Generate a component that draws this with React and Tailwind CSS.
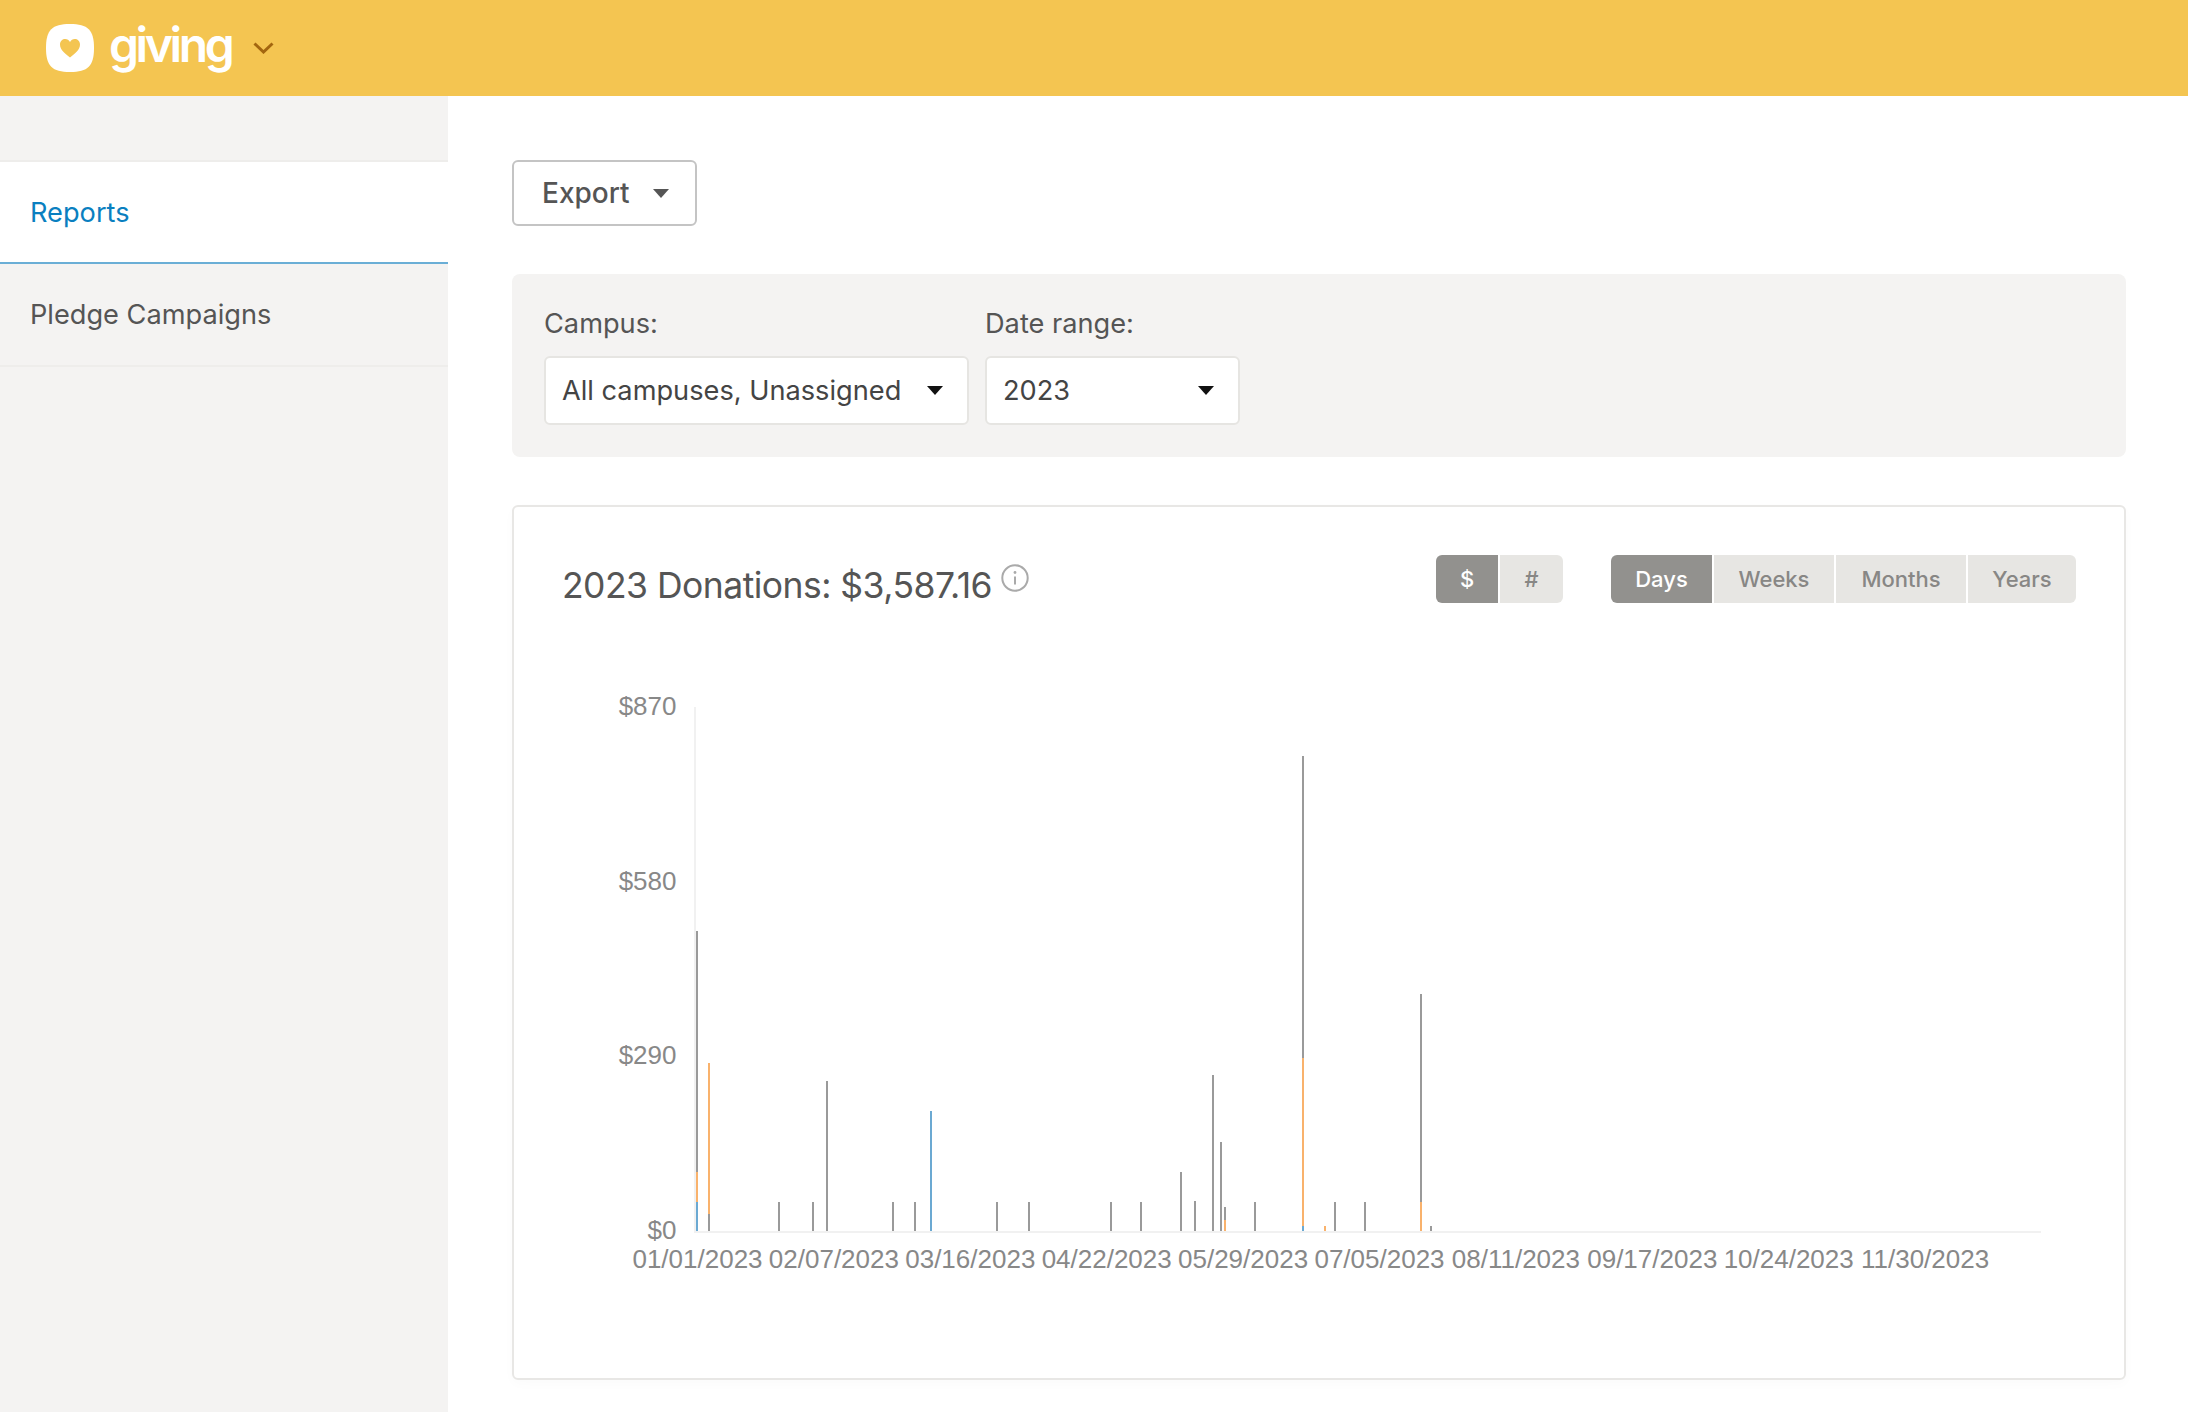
import React from "react";

const Caret = ({ className }) => (
  <svg width="16" height="9" viewBox="0 0 16 9" className={className}>
    <path d="M0 0 H16 L8 9 Z" fill="currentColor" />
  </svg>
);

const G = "#9a9a9a", O = "#f9b26c", B = "#6ba9d2";
// [x, [[from y, to y, colour], ...]]
const bars = [
  [697, [[931, 1172, G], [1172, 1202, O], [1202, 1231, B]]],
  [709, [[1063, 1214, O], [1214, 1231, G]]],
  [779, [[1202, 1231, G]]],
  [813, [[1202, 1231, G]]],
  [827, [[1081, 1231, G]]],
  [893, [[1202, 1231, G]]],
  [915, [[1202, 1231, G]]],
  [931, [[1111, 1231, B]]],
  [997, [[1202, 1231, G]]],
  [1029, [[1202, 1231, G]]],
  [1111, [[1202, 1231, G]]],
  [1141, [[1202, 1231, G]]],
  [1181, [[1172, 1231, G]]],
  [1195, [[1201, 1231, G]]],
  [1213, [[1075, 1231, G]]],
  [1221, [[1142, 1231, G]]],
  [1225, [[1207, 1220, G], [1220, 1231, O]]],
  [1255, [[1202, 1231, G]]],
  [1303, [[756, 1058, G], [1058, 1226, O], [1226, 1231, B]]],
  [1325, [[1226, 1231, O]]],
  [1335, [[1202, 1231, G]]],
  [1365, [[1202, 1231, G]]],
  [1421, [[994, 1202, G], [1202, 1231, O]]],
  [1431, [[1226, 1231, G]]],
];
const xLabels = ["01/01/2023", "02/07/2023", "03/16/2023", "04/22/2023", "05/29/2023", "07/05/2023", "08/11/2023", "09/17/2023", "10/24/2023", "11/30/2023"];
const yLabels = [["$870", 715], ["$580", 890], ["$290", 1064], ["$0", 1239]];

const Chart = () => (
  <svg viewBox="514 603 1610 727" className="block w-[1610px] h-[727px] -mx-12 font-['Liberation_Sans',sans-serif]">
    <rect x="694" y="707" width="2" height="526" fill="#f1f1f1" />
    <rect x="694" y="1231" width="1347" height="2" fill="#f1f1f1" />
    {bars.map(([x, segs]) =>
      segs.map(([a, b, c], i) => <rect key={x + "-" + i} x={x - 1} y={a} width="2" height={b - a} fill={c} />)
    )}
    {yLabels.map(([t, y]) => (
      <text key={t} x="676.500" y={y} textAnchor="end" className="text-[26px] fill-[#888888]">{t}</text>
    ))}
    {xLabels.map((t, i) => (
      <text key={t} x={697.5 + 136.4 * i} y="1268" textAnchor="middle" className="text-[26px] fill-[#888888]">{t}</text>
    ))}
  </svg>
);

const Toggle = ({ items, active, widths }) => (
  <div className="flex gap-[2px]">
    {items.map((t, i) => (
      <div
        key={t}
        style={{ width: widths[i] }}
        className={
          "h-12 flex items-center justify-center text-[22px] font-medium " +
          (t === active ? "bg-[#92918e] text-white " : "bg-[#e7e6e3] text-[#888785] ") +
          (i === 0 ? "rounded-l-md " : "") +
          (i === items.length - 1 ? "rounded-r-md" : "")
        }
      >
        {t}
      </div>
    ))}
  </div>
);

const Select = ({ label, value, w }) => (
  <div className={w}>
    <div className="text-[27.2px] leading-[36px] text-[#555] mb-[14px]">{label}</div>
    <div className="h-[69px] bg-white border-2 border-[#e6e5e2] rounded-md pl-[16px] pr-[24px] flex items-center justify-between text-[27.2px] text-[#444]">
      <span className="whitespace-nowrap pt-[1px]">{value}</span>
      <Caret className="text-[#111]" />
    </div>
  </div>
);

export default function App() {
  return (
    <div className="w-[2188px] h-[1412px] overflow-hidden flex flex-col bg-white font-['Inter',sans-serif]">
      <header className="h-24 shrink-0 bg-[#f4c551] flex items-center pl-[46px]">
        <svg width="48" height="48" viewBox="0 0 48 48">
          <path d="M24 0C42 0 48 6 48 24C48 42 42 48 24 48C6 48 0 42 0 24C0 6 6 0 24 0Z" fill="#fff" />
          <path d="M24 33.5C19 29.5 14 26 14 20.5C14 17 16.600 15 19.200 15C21.300 15 23 16 24 18C25 16 26.700 15 28.800 15C31.400 15 34 17 34 20.500C34 26 29 29.500 24 33.500Z" fill="#f4c551" />
        </svg>
        <span className="ml-[15px] text-[48px] leading-none font-semibold text-white tracking-[-3.4px] -mt-[6px]">giving</span>
        <svg width="21" height="12" viewBox="0 0 21 12" className="ml-[22px]">
          <path d="M1.500 1.500L10.500 10L19.500 1.500" fill="none" stroke="#a3660f" strokeWidth="3" />
        </svg>
      </header>
      <div className="flex-1 flex min-h-0">
        <aside className="w-[448px] shrink-0 bg-[#f4f3f2] pt-16">
          <div className="h-[104px] bg-white border-t-2 border-b-2 border-t-[#eeedeb] border-b-[#6aaed6] flex items-center pl-[30px] pt-[2px] text-[27.2px] text-[#0a7fc0]">Reports</div>
          <div className="h-[103px] border-b-2 border-[#eeedeb] flex items-center pl-[30px] pt-[2px] text-[27.2px] text-[#555]">Pledge Campaigns</div>
        </aside>
        <main className="flex-1 pt-16 pl-16 pr-[62px]">
          <button className="w-[185px] h-[66px] bg-white border-2 border-[#c4c4c4] rounded-md pl-[28px] pr-[26px] flex items-center justify-between text-[28px] font-[550] text-[#555]">
            Export
            <Caret className="text-[#555]" />
          </button>
          <section className="mt-12 h-[183px] bg-[#f4f3f2] rounded-lg pl-8 pt-[32px] flex gap-4">
            <Select label="Campus:" value="All campuses, Unassigned" w="w-[425px]" />
            <Select label="Date range:" value="2023" w="w-[255px]" />
          </section>
          <section className="mt-12 h-[875px] border-2 border-[#e8e7e5] rounded-md p-12 shadow-[0_4px_12px_rgba(0,0,0,0.02)]">
            <div className="h-12 flex items-start justify-between">
              <div className="flex items-start mt-[9px]">
                <h2 className="text-[35.5px] leading-[44px] text-[#555] font-normal tracking-[-0.53px] whitespace-nowrap">2023 Donations: $3,587.16</h2>
                <svg width="28" height="28" viewBox="0 0 28 28" className="ml-[9px]">
                  <circle cx="14" cy="14" r="12.700" fill="none" stroke="#aaa" strokeWidth="2" />
                  <circle cx="14" cy="8.500" r="1.400" fill="#aaa" />
                  <path d="M14 12.500V20.500" stroke="#aaa" strokeWidth="2" />
                </svg>
              </div>
              <div className="flex gap-12">
                <Toggle items={["$", "#"]} active="$" widths={[62, 63]} />
                <Toggle items={["Days", "Weeks", "Months", "Years"]} active="Days" widths={[101, 120, 130, 108]} />
              </div>
            </div>
            <Chart />
          </section>
        </main>
      </div>
    </div>
  );
}
